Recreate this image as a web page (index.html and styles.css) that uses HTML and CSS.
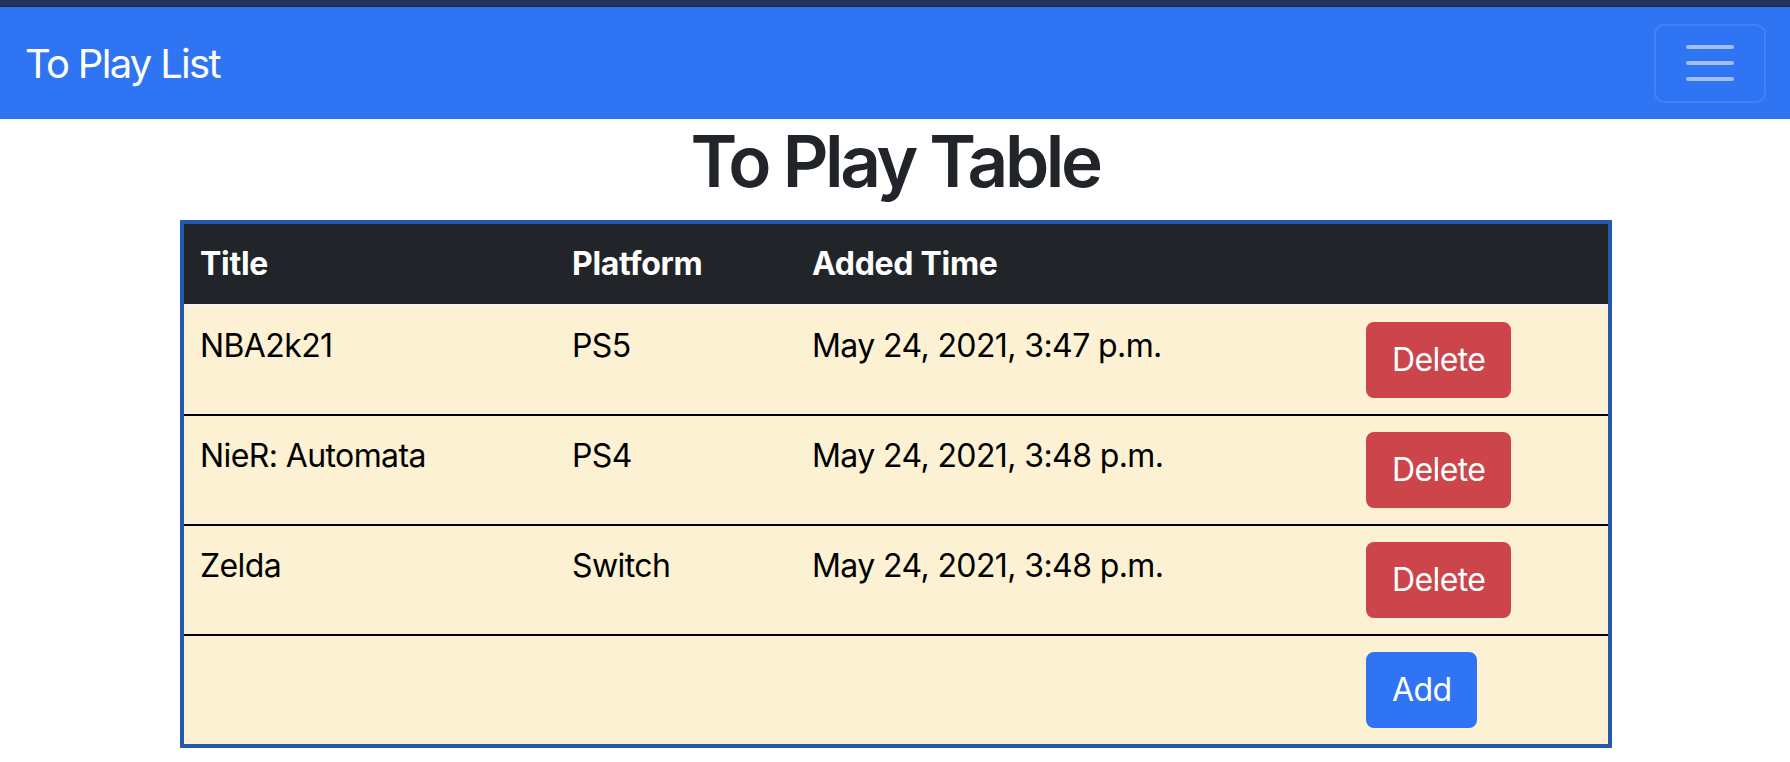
FILE: index.html
```html
<!DOCTYPE html>
<html lang="en">
<head>
<meta charset="utf-8">
<title>To Play List</title>
<link rel="stylesheet" href="styles.css">
</head>
<body>
<div class="topstrip"></div>
<nav class="navbar">
  <a class="brand" href="#">To Play List</a>
  <button class="toggler" type="button" aria-label="Toggle navigation">
    <svg class="toggler-icon" viewBox="0 0 30 30" width="60" height="60">
      <path d="M4 7h22M4 15h22M4 23h22" stroke="rgba(255,255,255,0.55)" stroke-width="2" stroke-linecap="round" stroke-miterlimit="10" fill="none"/>
    </svg>
  </button>
</nav>
<main class="content">
  <h1 class="title">To Play Table</h1>
  <div class="table-wrap">
    <table class="games">
      <colgroup>
        <col class="c-title">
        <col class="c-platform">
        <col class="c-time">
        <col class="c-action">
      </colgroup>
      <thead>
        <tr>
          <th>Title</th>
          <th>Platform</th>
          <th>Added Time</th>
          <th></th>
        </tr>
      </thead>
      <tbody>
        <tr>
          <td>NBA2k21</td>
          <td>PS5</td>
          <td>May 24, 2021, 3:47 p.m.</td>
          <td><button class="btn btn-danger">Delete</button></td>
        </tr>
        <tr>
          <td>NieR: Automata</td>
          <td>PS4</td>
          <td>May 24, 2021, 3:48 p.m.</td>
          <td><button class="btn btn-danger">Delete</button></td>
        </tr>
        <tr>
          <td>Zelda</td>
          <td>Switch</td>
          <td>May 24, 2021, 3:48 p.m.</td>
          <td><button class="btn btn-danger">Delete</button></td>
        </tr>
        <tr class="last">
          <td></td>
          <td></td>
          <td></td>
          <td><button class="btn btn-primary">Add</button></td>
        </tr>
      </tbody>
    </table>
  </div>
</main>
</body>
</html>
```
FILE: styles.css
```css
* { box-sizing: border-box; }

html, body {
  margin: 0;
  padding: 0;
  background: #ffffff;
}

body {
  font-family: Inter, "Noto Sans", "Liberation Sans", sans-serif;
  color: #212529;
  font-size: 32px;
  line-height: 1.5;
}

.topstrip {
  height: 7px;
  background: #22345a;
  border-bottom: 1px solid #1b2742;
}

.navbar {
  height: 112px;
  background: #2f74f3;
  display: flex;
  align-items: center;
  justify-content: space-between;
  padding: 0 24px 0 25px;
}

.brand {
  color: #ffffff;
  text-decoration: none;
  font-size: 40px;
  line-height: 60px;
  font-weight: 400;
  letter-spacing: -1.7px;
  padding-top: 2px;
}

.toggler {
  width: 112px;
  height: 79px;
  padding: 0;
  display: flex;
  align-items: center;
  justify-content: center;
  background: transparent;
  border: 2px solid rgba(255, 255, 255, 0.1);
  border-radius: 10px;
}

.toggler-icon { display: block; }

.content {
  display: flex;
  flex-direction: column;
  align-items: center;
}

.title {
  margin: 0 0 16px;
  font-size: 71px;
  line-height: 1.2;
  font-weight: 600;
  letter-spacing: -3.4px;
  color: #212529;
  text-align: center;
}

.table-wrap {
  width: 1432px;
  border: 4px solid #2557ae;
  margin-left: 2px;
}

.games {
  width: 100%;
  table-layout: fixed;
  border-collapse: separate;
  border-spacing: 0;
}

.c-title { width: 372px; }
.c-platform { width: 240px; }
.c-time { width: 554px; }
.c-action { width: 258px; }

.games th {
  background: #212529;
  color: #ffffff;
  font-weight: 700;
  text-align: left;
  padding: 16px;
  line-height: 48px;
  letter-spacing: -0.3px;
  border-bottom: 2px solid #f4f4f4;
  vertical-align: top;
}

.games td {
  background: #fcf1d2;
  color: #000000;
  padding: 16px;
  line-height: 48px;
  letter-spacing: -0.6px;
  vertical-align: top;
  border-bottom: 2px solid #000000;
}

.games tr.last td {
  border-bottom: 0;
}

.btn {
  display: inline-block;
  font-family: inherit;
  font-size: 32px;
  line-height: 48px;
  letter-spacing: -0.6px;
  padding: 12px 24px;
  border: 2px solid transparent;
  border-radius: 8px;
  color: #ffffff;
  cursor: pointer;
}

.btn-danger {
  background: #cb454b;
  border-color: #cb454b;
}

.btn-primary {
  background: #2f74f3;
  border-color: #2f74f3;
}
```
